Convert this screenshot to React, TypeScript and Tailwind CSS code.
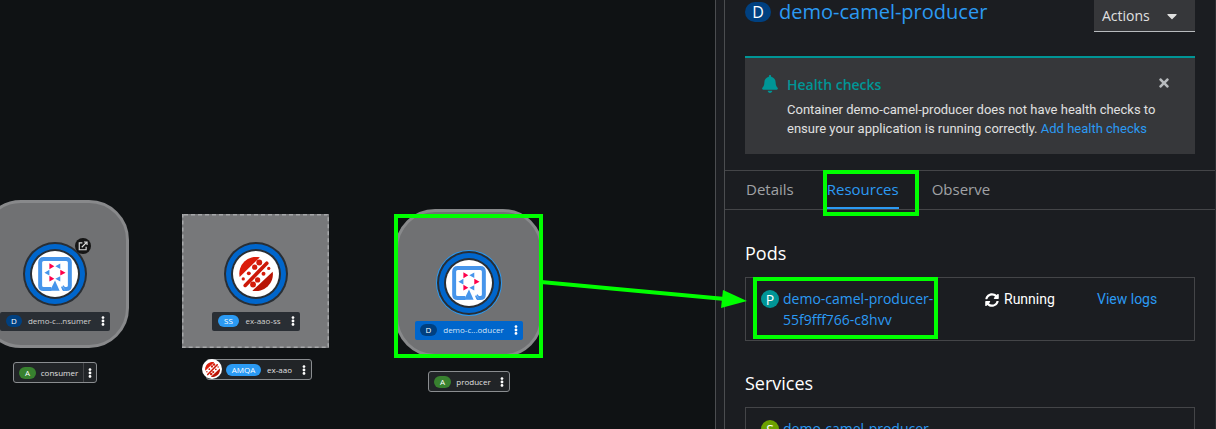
import type { ReactNode } from 'react';
import { FaBell, FaCaretDown, FaSyncAlt, FaTimes, FaEllipsisV } from 'react-icons/fa';

function QuarkusIcon() {
  return (
    <svg viewBox="0 0 102 103" className="size-[34px]" aria-hidden="true">
      <path
        d="M40 97H17Q6 97 6 86V17Q6 6 17 6H85Q96 6 96 17V86Q96 97 85 97H78L72 89"
        fill="none"
        stroke="#4695eb"
        strokeWidth="12"
      />
      <path d="M51 62L66 103H74L62 72L84 103" fill="#ffffff" />
      <path d="M51 71L65 102H36Z" fill="#4695eb" />
      <path d="M34 19V37L49 28ZM67 39V56L83 48ZM34 57V74L49 66Z" fill="#ff004a" />
      <path d="M67 20V36L52 28ZM34 39V56L19 48ZM67 58V74L52 66Z" fill="#4695eb" />
    </svg>
  );
}

function BrokerIcon({ className }: { className: string }) {
  return (
    <svg viewBox="0 0 104 104" className={className} aria-hidden="true">
      <path d="M2 61A51 51 0 0 1 64 1Z" fill="#db1c0a" />
      <path d="M103 45A51 51 0 0 1 41 103Z" fill="#b81405" />
      <path d="M19 87L85 19" stroke="#cc1808" strokeWidth="11" strokeLinecap="round" />
      <g fill="#d41b0a">
        <circle cx="62" cy="17" r="9" />
        <circle cx="48" cy="31" r="8" />
        <circle cx="30" cy="50" r="6" />
        <circle cx="13" cy="67" r="5" />
        <circle cx="43" cy="84" r="9" />
        <circle cx="57" cy="70" r="8" />
        <circle cx="75" cy="51" r="6" />
        <circle cx="91" cy="35" r="5" />
      </g>
    </svg>
  );
}

function NodeCircle({ selected, children }: { selected?: boolean; children: ReactNode }) {
  return (
    <div
      className={
        selected
          ? 'rounded-full bg-[#292e34] p-[2px] ring-1 ring-[#2b9af3]'
          : 'rounded-full bg-[#292e34] p-[2px]'
      }
    >
      <div className="rounded-full bg-[#0066cc] p-[5px]">
        <div className="rounded-full bg-[#292e34] p-[2px]">
          <div className="flex size-[46px] items-center justify-center rounded-full bg-white">{children}</div>
        </div>
      </div>
    </div>
  );
}

function Kebab({ label }: { label: string }) {
  return (
    <button type="button" aria-label={label} className="flex w-3 items-center justify-center text-white">
      <FaEllipsisV className="size-[10px]" />
    </button>
  );
}

function Sidebar() {
  return (
    <aside className="flex w-[501px] shrink-0 border-l border-[#4b4d50] bg-[#1b1d21] pl-2">
      <div className="min-w-0 flex-1 border-l border-r border-l-[#4b4d50] border-r-[#2c2e32]">
        <header className="flex h-8 items-start justify-between px-5">
          <h1 className="flex items-center gap-2 text-[20px] leading-6 text-[#2b9af3]">
            <span className="flex h-5 w-[26px] items-center justify-center rounded-full bg-[#004080] text-base text-white">
              D
            </span>
            <a href="#deployment">demo-camel-producer</a>
          </h1>
          <button
            type="button"
            className="flex h-8 w-[101px] items-center justify-between border-b border-[#b8bbbe] bg-[#36373a] pl-2 pr-[15px] text-sm text-[#e0e0e0]"
          >
            Actions
            <FaCaretDown className="size-4" />
          </button>
        </header>

        <section className="mx-5 mt-6 flex h-[98px] items-start border-t-2 border-[#009596] bg-[#36373a] pl-4 pr-6 pt-[17px]">
          <FaBell className="mr-2 size-[18px] shrink-0 text-[#009596]" />
          <div className="min-w-0 flex-1">
            <h2 className="text-sm font-semibold leading-5 text-[#009596]">Health checks</h2>
            <p className="mt-[5px] whitespace-nowrap font-['Roboto',sans-serif] text-[13px] leading-[19px] text-[#e0e0e0]">
              Container demo-camel-producer does not have health checks to
              <br />
              ensure your application is running correctly.{' '}
              <a href="#health" className="text-[#2b9af3]">
                Add health checks
              </a>
            </p>
          </div>
          <button type="button" aria-label="Close alert" className="mt-px text-[#b8bbbe]">
            <FaTimes className="size-[14px]" />
          </button>
        </section>

        <nav className="mt-4 flex h-10 gap-[33px] border-y border-[#444548] px-[21px] text-[15px] text-[#a0a2a5]">
          <a href="#details" className="flex items-center border-b-2 border-transparent">
            Details
          </a>
          <a
            href="#resources"
            aria-current="page"
            className="relative flex items-center border-b-2 border-[#2b9af3] text-[#2b9af3]"
          >
            Resources
            <span className="absolute -left-1 -right-5 -top-px h-[46px] border-4 border-[#00ff00]" />
          </a>
          <a href="#observe" className="flex items-center border-b-2 border-transparent">
            Observe
          </a>
        </nav>

        <section className="mx-5 mt-[31px]">
          <h2 className="text-lg font-medium leading-6 text-white">Pods</h2>
          <div className="mt-3 flex h-16 items-start border border-[#444548] pl-[15px] pt-[10px] text-sm leading-[21px]">
            <div className="relative flex w-[224px] items-start gap-1">
              <span className="mt-[2px] flex size-[18px] shrink-0 items-center justify-center rounded-full bg-[#009596] text-white">
                P
              </span>
              <a href="#pod" className="text-[#2b9af3]">
                demo-camel-producer-
                <br />
                55f9fff766-c8hvv
              </a>
              <span className="absolute -left-2 -top-[11px] h-[62px] w-[185px] border-4 border-[#00ff00]" />
            </div>
            <div className="flex w-[112px] items-center gap-[5px] pt-px font-['Roboto',sans-serif] text-white">
              <FaSyncAlt className="size-[14px]" />
              Running
            </div>
            <a href="#logs" className="pt-px font-['Roboto',sans-serif] text-[#2b9af3]">
              View logs
            </a>
          </div>
        </section>

        <section className="mx-5 mt-[30px]">
          <h2 className="text-lg font-medium leading-6 text-white">Services</h2>
          <div className="mt-3 flex h-16 items-start gap-1 border border-[#444548] pl-[15px] pt-[10px] text-sm leading-[21px]">
            <span className="mt-[2px] flex size-[18px] shrink-0 items-center justify-center rounded-full bg-[#6ca100] text-white">
              S
            </span>
            <a href="#service" className="text-[#2b9af3]">
              demo-camel-producer
            </a>
          </div>
        </section>
      </div>
    </aside>
  );
}

const nodeLabel = 'absolute flex h-[19px] items-center rounded-[2px] pb-px text-[8px] leading-3';
const groupLabel =
  'absolute flex h-[21px] items-center rounded-[3px] border border-[#8a8d90] bg-[#212427] text-[8px] leading-3 text-[#e0e0e0]';
const pill = 'flex h-3 shrink-0 items-center justify-center rounded-full text-[8px]';

function Topology() {
  return (
    <main className="relative min-w-0 flex-1 overflow-hidden bg-[#0f1214]">
      <div className="absolute -left-[19px] top-[200px] h-[148px] w-[148px] rounded-[40px] border-[3px] border-[#88898b] bg-[#707173]" />
      <div className="absolute left-[23px] top-[242px]">
        <NodeCircle>
          <QuarkusIcon />
        </NodeCircle>
      </div>
      <a
        href="#open"
        aria-label="Open URL"
        className="absolute left-[75px] top-[238px] flex size-4 items-center justify-center rounded-full bg-[#151515] text-[#e0e0e0]"
      >
        <svg viewBox="0 0 16 16" className="size-[10px]" fill="none" stroke="currentColor" strokeWidth="1.8">
          <path d="M7 3H2V14H13V9M6 10L14 2M9.5 1.5H14.5V6.5" />
        </svg>
      </a>
      <div className={`${nodeLabel} left-0 top-[312px] w-[110px] bg-[#292e34] pl-[6px] text-[#d2d2d2]`}>
        <span className={`${pill} w-4 bg-[#004080] text-white`}>D</span>
        <span className="flex-1 text-center">demo-c...nsumer</span>
        <Kebab label="demo-camel-consumer actions" />
        <span className="w-px" />
      </div>
      <div className={`${groupLabel} left-[13px] top-[362px] w-[84px] pl-[5px]`}>
        <span className={`${pill} w-[17px] bg-[#38812f] text-white`}>A</span>
        <span className="flex-1 text-center">consumer</span>
        <span className="flex h-full items-center border-l border-[#444548]">
          <Kebab label="consumer actions" />
        </span>
      </div>

      <div className="absolute left-[182px] top-[214px] h-[134px] w-[147px] bg-[#77787a]">
        <svg className="size-full" aria-hidden="true">
          <rect
            x="0"
            y="0"
            width="100%"
            height="100%"
            rx="2"
            fill="none"
            stroke="#a6a7a9"
            strokeWidth="3"
            strokeDasharray="4 3"
          />
        </svg>
      </div>
      <div className="absolute left-[224px] top-[242px]">
        <NodeCircle>
          <BrokerIcon className="size-[34px]" />
        </NodeCircle>
      </div>
      <div className={`${nodeLabel} left-[212px] top-[312px] w-[88px] bg-[#292e34] pl-[6px] text-[#d2d2d2]`}>
        <span className={`${pill} w-[21px] bg-[#2b9af3] text-white`}>SS</span>
        <span className="flex-1 text-center">ex-aao-ss</span>
        <Kebab label="ex-aao-ss actions" />
        <span className="w-px" />
      </div>
      <div className={`${groupLabel} left-[206px] top-[359px] w-[106px] pl-[19px]`}>
        <span className="absolute -left-[5px] -top-px flex size-5 items-center justify-center rounded-full bg-white">
          <BrokerIcon className="size-[15px]" />
        </span>
        <span className={`${pill} w-[35px] bg-[#2b9af3] text-white`}>AMQA</span>
        <span className="flex-1 text-center">ex-aao</span>
        <Kebab label="ex-aao actions" />
        <span className="w-px" />
      </div>

      <div className="absolute left-[395px] top-[209px] h-[148px] w-[148px] rounded-[40px] border-[3px] border-[#88898b] bg-[#707173]" />
      <div className="absolute left-[437px] top-[251px]">
        <NodeCircle selected>
          <QuarkusIcon />
        </NodeCircle>
      </div>
      <div className={`${nodeLabel} left-[415px] top-[321px] w-[108px] bg-[#0066cc] pl-[5px] text-[#d2e4f7]`}>
        <span className={`${pill} w-[17px] bg-[#004080] text-white`}>D</span>
        <span className="flex-1 text-center">demo-c...oducer</span>
        <Kebab label="demo-camel-producer actions" />
        <span className="w-px" />
      </div>
      <div className={`${groupLabel} left-[428px] top-[371px] w-[82px] pl-[5px]`}>
        <span className={`${pill} w-[17px] bg-[#38812f] text-white`}>A</span>
        <span className="flex-1 text-center">producer</span>
        <Kebab label="producer actions" />
        <span className="w-px" />
      </div>
      <div className="absolute left-[394px] top-[214px] h-[144px] w-[149px] border-4 border-[#00ff00]" />
    </main>
  );
}

export default function App() {
  return (
    <div className="relative flex h-screen overflow-hidden bg-[#0f1214] font-['Open_Sans',sans-serif]">
      <Topology />
      <Sidebar />
      <svg
        className="pointer-events-none absolute right-[469px] top-[276px] h-[36px] w-[206px]"
        viewBox="0 0 206 36"
        aria-hidden="true"
      >
        <path d="M0 6L184 23" stroke="#00ff00" strokeWidth="4" />
        <path d="M182 14L206 25L180 32Z" fill="#00ff00" />
      </svg>
    </div>
  );
}
